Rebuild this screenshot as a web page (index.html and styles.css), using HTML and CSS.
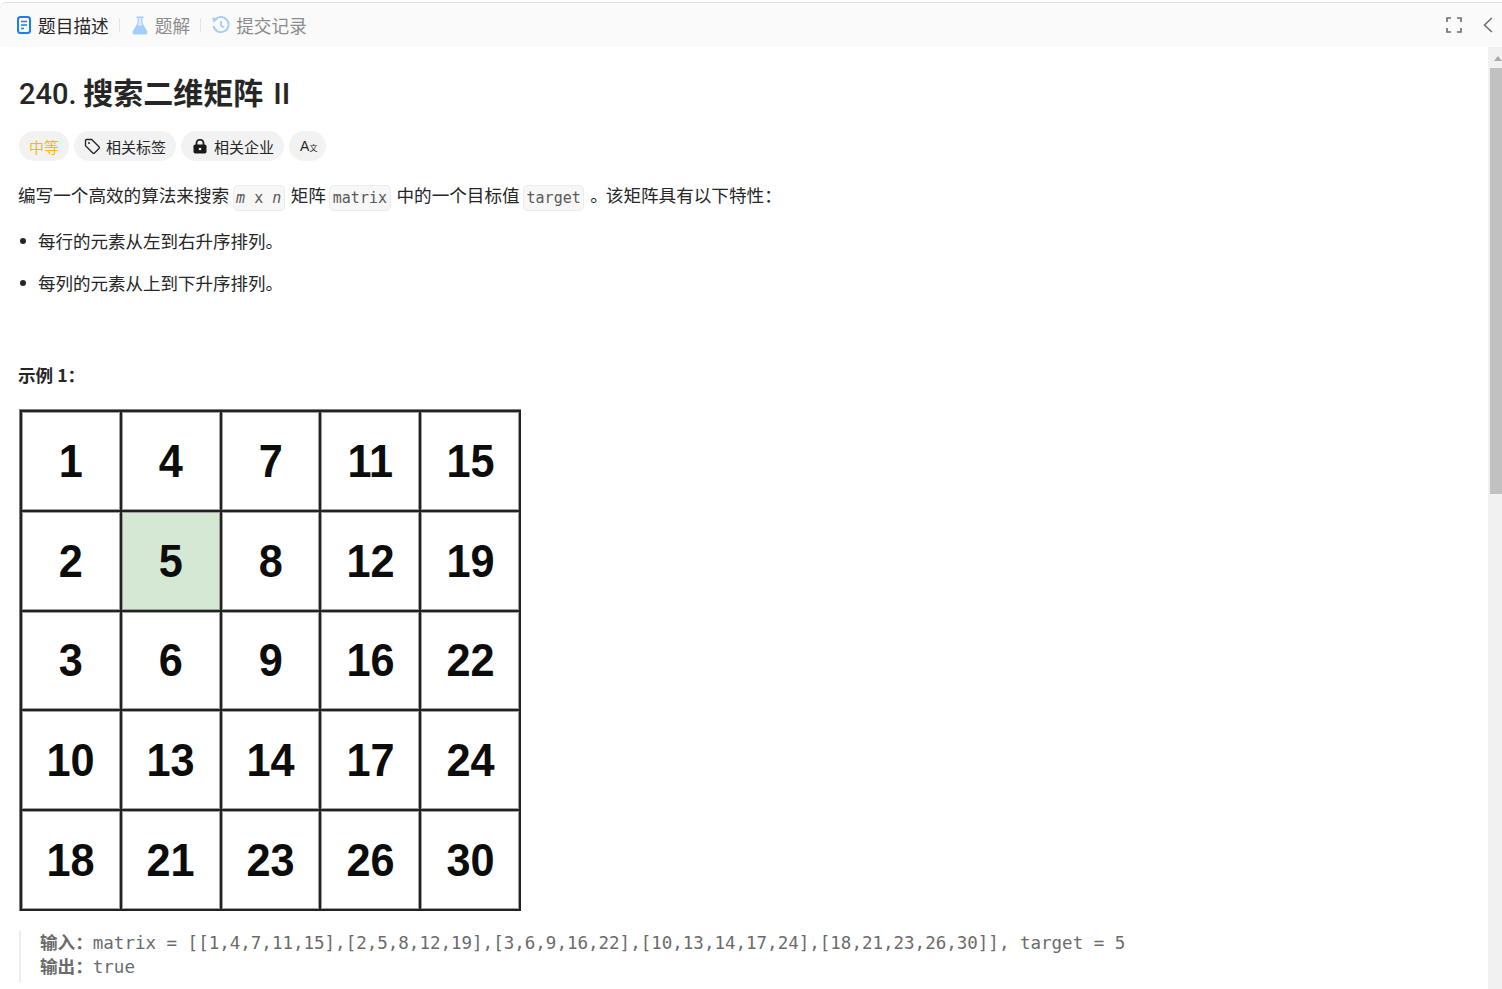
FILE: index.html
```html
<!DOCTYPE html>
<html>
<head>
<meta charset="utf-8">
<meta name="viewport" content="width=device-width, initial-scale=1.0"/>
<title>240. 搜索二维矩阵 II</title>
<link rel="stylesheet" href="styles.css">
</head>
<body>
    <div class="tabBar">
        <div class="tab tabActive">
            <svg class="tabIcon" width="14" height="18" viewBox="0 0 14 18"><rect x="1" y="1" width="12" height="16" rx="2.5" fill="none" stroke="#1a7ff0" stroke-width="2"/><path d="M4 5.5h6M4 9h6M4 12.5h3" stroke="#1a7ff0" stroke-width="1.6" fill="none"/></svg>
            <span>题目描述</span>
        </div>
        <div class="tabSep"></div>
        <div class="tab">
            <svg class="tabIcon" width="16" height="19" viewBox="0 0 16 19"><path d="M4.500 0.500h7v1.500h-1v5l4.700 8.200c.8 1.500-.2 3.300-1.900 3.300H2.700C1 18.500 0 16.700.8 15.200L5.500 7V2h-1z" fill="#a3cdfb"/><path d="M6.700 2h2.600v5.300l1.300 2.200H5.400l1.300-2.200z" fill="#dcebfd"/></svg>
            <span>题解</span>
        </div>
        <div class="tabSep"></div>
        <div class="tab tabHistory">
            <svg class="tabIcon" width="18" height="18" viewBox="0 0 18 18"><path d="M3 3.800A7.600 7.600 0 1 1 1.500 10" fill="none" stroke="#a3cdfb" stroke-width="1.900"/><path d="M0.300 1.400l6 1.100-4.800 4.300z" fill="#a3cdfb"/><path d="M9 5v4.600l3 1.900" fill="none" stroke="#a3cdfb" stroke-width="1.800"/></svg>
            <span>提交记录</span>
        </div>
        <div class="barRight">
            <svg width="16" height="16" viewBox="0 0 16 16"><path d="M1 5V1h4M11 1h4v4M15 11v4h-4M5 15H1v-4" fill="none" stroke="#6b6b6b" stroke-width="1.600"/></svg>
            <svg width="10" height="16" viewBox="0 0 10 16"><path d="M8.800 1L1.500 8l7.300 7" fill="none" stroke="#6b6b6b" stroke-width="1.500"/></svg>
        </div>
    </div>

    <div class="pane">
        <div class="content">
            <h1 class="title"><span class="titleNum">240.</span> 搜索二维矩阵 <span class="titleRoman">II</span></h1>

            <div class="chips">
                <div class="chip chipHard">中等</div>
                <div class="chip">
                    <svg width="17" height="17" viewBox="0 0 17 17"><path d="M1.500 2.500a1 1 0 0 1 1-1h5.200l7.300 7.300a1.200 1.200 0 0 1 0 1.700l-4.500 4.500a1.200 1.200 0 0 1-1.700 0L1.500 7.700z" fill="none" stroke="#262626" stroke-width="1.300"/><circle cx="5" cy="5" r="1" fill="#262626"/></svg>
                    相关标签
                </div>
                <div class="chip chipLock">
                    <svg width="14" height="15" viewBox="0 0 14 15"><path d="M3.500 6V4.200a3.500 3.500 0 0 1 7 0V6" fill="none" stroke="#1a1a1a" stroke-width="1.800"/><rect x="0.500" y="5.500" width="13" height="9" rx="1.800" fill="#1a1a1a"/><circle cx="7" cy="10" r="1.300" fill="#f2f2f2"/></svg>
                    相关企业
                </div>
                <div class="chip chipLang"><span>A</span><span class="langSmall">文</span></div>
            </div>

            <p class="intro">编写一个高效的算法来搜索 <code><em>m</em> x <em>n</em></code> 矩阵 <code>matrix</code> 中的一个目标值 <code>target</code> <span class="stop">。</span>该矩阵具有以下特性：</p>

            <ul class="rules">
                <li>每行的元素从左到右升序排列。</li>
                <li>每列的元素从上到下升序排列。</li>
            </ul>

            <p class="exampleTitle"><strong>示例 1：</strong></p>

            <div class="matrix">
                <div><span>1</span></div><div><span>4</span></div><div><span>7</span></div><div><span>11</span></div><div><span>15</span></div>
                <div><span>2</span></div><div class="hit"><span>5</span></div><div><span>8</span></div><div><span>12</span></div><div><span>19</span></div>
                <div><span>3</span></div><div><span>6</span></div><div><span>9</span></div><div><span>16</span></div><div><span>22</span></div>
                <div><span>10</span></div><div><span>13</span></div><div><span>14</span></div><div><span>17</span></div><div><span>24</span></div>
                <div><span>18</span></div><div><span>21</span></div><div><span>23</span></div><div><span>26</span></div><div><span>30</span></div>
            </div>

            <pre class="sample"><strong>输入：</strong>matrix = [[1,4,7,11,15],[2,5,8,12,19],[3,6,9,16,22],[10,13,14,17,24],[18,21,23,26,30]], target = 5
<strong>输出：</strong>true</pre>
        </div>

        <div class="scrollTrack">
            <div class="scrollUp"></div>
            <div class="scrollThumb"></div>
        </div>
    </div>
</body>
</html>
```

FILE: styles.css
```css
html, body {
    margin: 0;
    height: 100%;
    overflow: hidden;
    background: #ffffff;
}

body {
    display: flex;
    flex-direction: column;
    color: #262626;
    font-family: "Noto Sans CJK SC", "Liberation Sans", sans-serif;
    font-size: 17.6px;
    padding-top: 2px;
    box-sizing: border-box;
}

.tabBar {
    display: flex;
    align-items: center;
    height: 45px;
    flex: none;
    box-sizing: border-box;
    padding: 0 9px 0 17px;
    background: #fafafa;
    border-top: 1px solid #e0e0e0;
    border-top-left-radius: 6px;
    font-size: 17.7px;
    color: #8c8c8c;
}

.tab {
    display: flex;
    align-items: center;
    gap: 7px;
}

.tabActive {
    color: #262626;
}

.tabHistory {
    gap: 6px;
    margin-left: -1px;
}

.tabSep {
    width: 1px;
    height: 14px;
    margin: 0 12px 0 10px;
    background: #e4e4e4;
}

.barRight {
    display: flex;
    align-items: center;
    gap: 21px;
    margin-left: auto;
}

.pane {
    display: flex;
    flex: 1;
    min-height: 0;
}

.content {
    flex: 1;
    min-width: 0;
    padding: 23px 0 0 18px;
}

.title {
    margin: 0;
    font-size: 30px;
    line-height: 42px;
    font-weight: 700;
    color: #262626;
}

.titleNum {
    font-family: "Roboto", "Liberation Sans", sans-serif;
    font-size: 29px;
    font-weight: 500;
    margin-left: 1px;
}

.titleRoman {
    font-family: "Roboto", "Liberation Sans", sans-serif;
    font-size: 30px;
    font-weight: 500;
    margin-left: 3px;
}

.chips {
    display: flex;
    gap: 5px;
    margin: 16px 0 0 1px;
}

.chip {
    display: flex;
    align-items: center;
    gap: 5px;
    height: 30px;
    padding: 0 10px;
    border-radius: 15px;
    background: #f2f2f2;
    font-size: 15px;
    color: #262626;
}

.chipHard {
    color: #ffb800;
}

.chipLock {
    gap: 7px;
    padding: 0 10px 0 12px;
}

.chipLang {
    gap: 0;
    padding: 0 9px 0 11px;
    font-family: "Liberation Sans", sans-serif;
    font-size: 14px;
}

.langSmall {
    font-family: "Noto Sans CJK SC", sans-serif;
    font-size: 8px;
    margin-top: 3px;
}

.intro {
    margin: 19px 0 0;
    line-height: 30px;
    white-space: nowrap;
    word-spacing: -0.5px;
}

.stop {
    margin-right: -2px;
}

code {
    font-family: "DejaVu Sans Mono", monospace;
    font-size: 15px;
    line-height: 1;
    vertical-align: -1px;
    color: #595959;
    background: #f7f7f7;
    border: 1px solid #ececec;
    border-radius: 5px;
    padding: 3px 2.5px;
    margin-right: 2.5px;
    word-spacing: 0;
}

.rules {
    margin: 18px 0 0;
    padding: 0 0 0 2px;
    list-style: none;
    font-size: 17.5px;
}

.rules li {
    display: flex;
    align-items: center;
    gap: 12px;
    line-height: 26px;
    margin-bottom: 16px;
}

.rules li::before {
    content: "";
    width: 6px;
    height: 6px;
    border-radius: 50%;
    background: #262626;
}

.exampleTitle {
    margin: 66px 0 0;
    line-height: 26px;
    font-size: 17.6px;
}

.exampleTitle strong {
    font-weight: 700;
}

.matrix {
    display: grid;
    grid-template-columns: repeat(5, 1fr);
    grid-template-rows: repeat(5, 1fr);
    width: 502px;
    height: 502px;
    margin: 21px 0 0 1px;
    padding: 2px 0 0 2px;
    box-sizing: border-box;
    border-left: 1px solid #808080;
    border-top: 1px solid #808080;
    background: #222222;
}

.matrix div {
    display: flex;
    align-items: center;
    justify-content: center;
    margin: 0 2px 2px 0;
    background: #ffffff;
    box-shadow: inset 0 0 0 1px #a0a0a0;
    color: #0c0c0c;
    font-family: "Liberation Sans", sans-serif;
    font-size: 46px;
    font-weight: 700;
}

.matrix span {
    display: inline-block;
    transform: scaleX(0.94);
}

.matrix .hit {
    background: #d5e8d4;
}

.sample {
    margin: 20px 0 0 1px;
    padding: 0 0 3px 19px;
    border-left: 2px solid #eeeeee;
    font-family: "DejaVu Sans Mono", "Noto Sans CJK SC", monospace;
    font-size: 17.5px;
    line-height: 24px;
    color: #6b6b6b;
}

.sample strong {
    font-family: "Noto Sans CJK SC", sans-serif;
    font-size: 17.6px;
    line-height: 1;
    font-weight: 700;
}

.scrollTrack {
    display: flex;
    flex-direction: column;
    align-items: flex-end;
    flex: none;
    width: 14px;
    background: #f1f1f1;
}

.scrollUp {
    width: 0;
    height: 0;
    margin: 9px 0 7px;
    border-left: 4px solid transparent;
    border-right: 4px solid transparent;
    border-bottom: 5px solid #a8a8a8;
}

.scrollThumb {
    width: 12px;
    height: 426px;
    background: #c1c1c1;
}
```
